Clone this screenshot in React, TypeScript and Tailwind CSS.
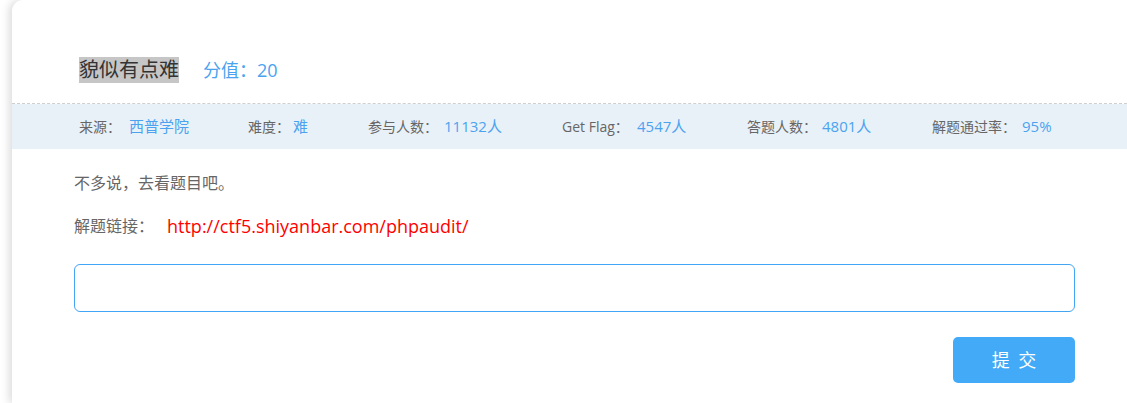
import React from 'react';

const stats = [
  { label: '来源：', value: '西普学院', w: 'w-[169px]', lw: 'w-[50px]' },
  { label: '难度：', value: '难', w: 'w-[120px]', lw: 'w-[45px]' },
  { label: '参与人数：', value: '11132人', w: 'w-[194px]', lw: 'w-[76px]' },
  { label: 'Get Flag：', value: '4547人', w: 'w-[185px]', lw: 'w-[75px]' },
  { label: '答题人数：', value: '4801人', w: 'w-[185px]', lw: 'w-[75px]' },
  { label: '解题通过率：', value: '95%', w: 'w-[120px]', lw: 'w-[90px]' },
];

export default function App() {
  const [flag, setFlag] = React.useState('');

  return (
    <div className="h-[403px] w-full overflow-hidden bg-white pl-[12px] font-['Open_Sans','Noto_Sans_CJK_SC',sans-serif]">
      <div className="flex h-full flex-col rounded-tl-[11px] bg-white shadow-[-3px_0_9px_rgba(0,0,0,0.14)]">
        {/* title */}
        <div className="flex items-center border-b border-dashed border-[#cfcfcf] pb-[20px] pl-[67px] pt-[57px]">
          <span className="bg-[#c6c6c6] text-[20px] leading-[26px] text-[#333]">貌似有点难</span>
          <span className="ml-[24px] text-[18px] leading-[26px] text-[#4aa3f0]">分值：20</span>
        </div>

        {/* stats band */}
        <div className="flex h-[45px] items-center bg-[#e9f1f8] pl-[67px] text-[14px] leading-[20px]">
          {stats.map((s) => (
            <div key={s.label} className={`flex shrink-0 items-baseline ${s.w}`}>
              <span className={`shrink-0 text-[#666] ${s.lw}`}>{s.label}</span>
              <span className="text-[15px] text-[#4ba3f0]">{s.value}</span>
            </div>
          ))}
        </div>

        {/* body */}
        <div className="flex flex-col pl-[62px] pr-[52px] pt-[22px]">
          <p className="text-[16px] leading-[24px] text-[#666]">不多说，去看题目吧。</p>
          <div className="mt-[19px] flex items-center text-[16px] leading-[24px]">
            <span className="w-[93px] shrink-0 text-[#666]">解题链接：</span>
            <a href="#" className="text-[18px] text-[#ff0000]">http://ctf5.shiyanbar.com/phpaudit/</a>
          </div>
          <input
            value={flag}
            onChange={(e) => setFlag(e.target.value)}
            className="mt-[26px] h-[48px] w-full rounded-[6px] border border-[#42a5f5] px-3 text-[16px] outline-none"
          />
          <button
            type="button"
            className="mt-[25px] h-[46px] w-[122px] self-end rounded-[5px] bg-[#42aaf6] pl-[2px] text-[18px] tracking-[2px] text-white"
          >
            提 交
          </button>
        </div>
      </div>
    </div>
  );
}
